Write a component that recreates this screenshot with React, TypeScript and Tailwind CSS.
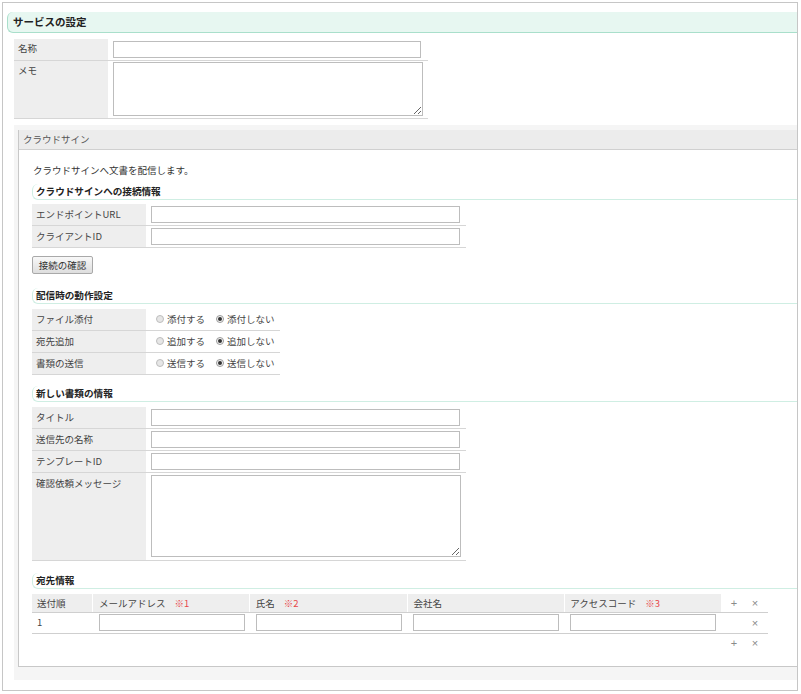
import React from 'react';

// Service settings form: plain layout with flex rows, fixed widths taken from the design

const Heading = ({ title, className }: { title: string; className: string }) => (
  <div
    className={`h-[16px] rounded-l-[6px] border-l border-b border-[#cfeee3] pl-[3px] text-[9.6px] font-bold leading-[15px] text-[#222] ${className}`}
  >
    {title}
  </div>
);

const FieldRow = ({ label, children, tall }: { label: string; children: React.ReactNode; tall?: boolean }) => (
  <div className={tall ? 'flex h-[88px] border-b border-[#d6d6d6]' : 'flex h-[22px] border-b border-[#d6d6d6]'}>
    <div className="w-[114px] bg-[#eeeeee] pl-[4px] pt-[3px] leading-[14px] text-[#444]">{label}</div>
    <div className="pl-[5px] pt-[2px]">{children}</div>
  </div>
);

const TextInput = ({ width }: { width: string }) => (
  <input type="text" className={`${width} h-[17px] border border-[#bdbdbd] bg-white`} />
);

const Radio = ({ checked, label }: { checked?: boolean; label: string }) => (
  <span className="flex items-center gap-[3px]">
    {checked ? (
      <span className="flex h-[8px] w-[8px] items-center justify-center rounded-full border border-[#9a9a9a] bg-[#f4f4f4]">
        <span className="h-[4px] w-[4px] rounded-full bg-[#333]" />
      </span>
    ) : (
      <span className="h-[8px] w-[8px] rounded-full border border-[#bdbdbd] bg-[#e6e6e6]" />
    )}
    <span>{label}</span>
  </span>
);

const RadioRow = ({ label, yes, no }: { label: string; yes: string; no: string }) => (
  <div className="flex h-[22px] w-[248px] border-b border-[#d6d6d6]">
    <div className="w-[114px] bg-[#eeeeee] pl-[4px] pt-[3px] leading-[14px] text-[#444]">{label}</div>
    <div className="flex items-center gap-[11px] pl-[10px] pb-[1px] text-[#444]">
      <Radio label={yes} />
      <Radio checked label={no} />
    </div>
  </div>
);

const Mark = ({ n }: { n: number }) => <span className="ml-[9px] text-[#e8474a]">※{n}</span>;

const Controls = ({ plus }: { plus?: boolean }) => (
  <div className="flex w-[46px] items-center pl-[8px] font-['Liberation_Sans',sans-serif] text-[11px] text-[#8a8a8a]">
    <span className="w-[8px] text-center">{plus ? '+' : ''}</span>
    <span className="ml-[13px] w-[8px] text-center">×</span>
  </div>
);

function App() {
  return (
    <div className="min-h-[694px] bg-white pl-[2px] pt-[2px] font-['Noto_Sans_CJK_JP',sans-serif] text-[9.5px] text-[#333]">
      <div className="h-[689px] w-[796px] border border-[#c6c6c6] bg-white">
        {/* page heading */}
        <div className="ml-[4px] mt-[9px] h-[21px] rounded-l-[6px] border-l border-b border-[#a9dfcb] bg-[#e7f7f1] pl-[5px] text-[10.5px] font-bold leading-[20px] text-[#222]">
          サービスの設定
        </div>

        <div className="ml-[11px] mt-[6px] w-[414px]">
          <div className="flex h-[22px] border-b border-[#d6d6d6]">
            <div className="w-[94px] bg-[#eeeeee] pl-[4px] pt-[2px] leading-[14px] text-[#444]">名称</div>
            <div className="pl-[5px] pt-[2px]">
              <TextInput width="w-[308px]" />
            </div>
          </div>
          <div className="flex h-[58px] border-b border-[#d6d6d6]">
            <div className="w-[94px] bg-[#eeeeee] pl-[4px] pt-[2px] leading-[14px] text-[#444]">メモ</div>
            <div className="pl-[5px] pt-[1px]">
              <textarea className="h-[54px] w-[310px] border border-[#bdbdbd] bg-white" />
            </div>
          </div>
        </div>

        {/* cloudsign block */}
        <div className="ml-[11px] mt-[6px] bg-[#f5f5f5] pl-[4px] pt-[5px] pb-[13px]">
          <div className="border-l border-b border-[#c8c8c8] bg-white">
            <div className="h-[20px] border-b border-[#d0d0d0] bg-[#ececec] pl-[4px] leading-[19px] text-[#555]">
              クラウドサイン
            </div>
            <div className="h-[516px] pl-[13px] pt-[12px]">
              <div className="pl-[1px] leading-[16px] text-[#333]">クラウドサインへ文書を配信します。</div>

              <Heading title="クラウドサインへの接続情報" className="mt-[6px]" />
              <div className="mt-[4px] w-[434px]">
                <FieldRow label="エンドポイントURL">
                  <TextInput width="w-[309px]" />
                </FieldRow>
                <FieldRow label="クライアントID">
                  <TextInput width="w-[309px]" />
                </FieldRow>
              </div>
              <button className="mt-[8px] h-[18px] w-[61px] rounded-[2px] border border-[#a9a9a9] bg-gradient-to-b from-[#f8f8f8] to-[#dedede] text-[9.5px] leading-[16px] text-[#333]">
                接続の確認
              </button>

              <Heading title="配信時の動作設定" className="mt-[14px]" />
              <div className="mt-[5px]">
                <RadioRow label="ファイル添付" yes="添付する" no="添付しない" />
                <RadioRow label="宛先追加" yes="追加する" no="追加しない" />
                <RadioRow label="書類の送信" yes="送信する" no="送信しない" />
              </div>

              <Heading title="新しい書類の情報" className="mt-[11px]" />
              <div className="mt-[5px] w-[434px]">
                <FieldRow label="タイトル">
                  <TextInput width="w-[309px]" />
                </FieldRow>
                <FieldRow label="送信先の名称">
                  <TextInput width="w-[309px]" />
                </FieldRow>
                <FieldRow label="テンプレートID">
                  <TextInput width="w-[309px]" />
                </FieldRow>
                <FieldRow label="確認依頼メッセージ" tall>
                  <textarea className="h-[82px] w-[310px] border border-[#bdbdbd] bg-white" />
                </FieldRow>
              </div>

              <Heading title="宛先情報" className="mt-[12px]" />
              <div className="mt-[5px] w-[736px]">
                <div className="flex h-[19px] gap-[1px] border-b border-[#cfcfcf] leading-[18px] text-[#444]">
                  <div className="w-[60px] bg-[#eeeeee] pl-[5px]">送付順</div>
                  <div className="w-[156px] bg-[#eeeeee] pl-[6px]">
                    メールアドレス<Mark n={1} />
                  </div>
                  <div className="w-[158px] bg-[#eeeeee] pl-[6px]">
                    氏名<Mark n={2} />
                  </div>
                  <div className="w-[156px] bg-[#eeeeee] pl-[5px]">会社名</div>
                  <div className="w-[156px] bg-[#eeeeee] pl-[5px]">
                    アクセスコード<Mark n={3} />
                  </div>
                  <Controls plus />
                </div>
                <div className="flex h-[21px] gap-[1px] border-b border-[#cfcfcf] text-[#444]">
                  <div className="w-[60px] pl-[5px] leading-[19px]">1</div>
                  <div className="w-[156px] pl-[6px] pt-[1px]">
                    <TextInput width="w-[146px]" />
                  </div>
                  <div className="w-[158px] pl-[6px] pt-[1px]">
                    <TextInput width="w-[146px]" />
                  </div>
                  <div className="w-[156px] pl-[5px] pt-[1px]">
                    <TextInput width="w-[146px]" />
                  </div>
                  <div className="w-[156px] pl-[5px] pt-[1px]">
                    <TextInput width="w-[146px]" />
                  </div>
                  <Controls />
                </div>
                <div className="flex h-[18px] justify-end">
                  <Controls plus />
                </div>
              </div>
            </div>
          </div>
        </div>
      </div>
    </div>
  );
}

export default App;
